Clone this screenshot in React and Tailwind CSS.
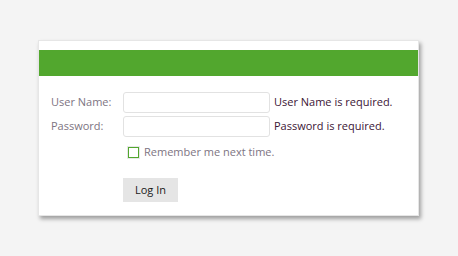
import React from 'react';

export default function App() {
  return (
    <div className="w-[458px] h-[256px] bg-[#f4f4f4] pt-[40px] pl-[38px] font-['Open_Sans','Noto_Sans',sans-serif]">
      <div className="w-[381px] h-[176px] bg-white border border-[#e6e6e6] shadow-[2px_3px_4px_rgba(0,0,0,0.35)] pt-[9px]">
        <div className="h-[26px] bg-[#52a72e]" />
        <form className="pl-[12px] pt-[16px]" onSubmit={(e) => e.preventDefault()}>
          <div className="flex items-center h-[21px]">
            <label className="w-[72px] text-[11px] text-[#7d7482]">User Name:</label>
            <input className="w-[147px] h-[21px] border border-[#e2e2e2] rounded-[3px] outline-none" />
            <span className="ml-[4px] text-[11px] text-[#3c1535]">User Name is required.</span>
          </div>
          <div className="flex items-center h-[21px] mt-[3px]">
            <label className="w-[72px] text-[11px] text-[#7d7482]">Password:</label>
            <input type="password" className="w-[147px] h-[21px] border border-[#e2e2e2] rounded-[3px] outline-none" />
            <span className="ml-[4px] text-[11px] text-[#3c1535]">Password is required.</span>
          </div>
          <div className="flex items-center mt-[8px] ml-[77px] h-[14px]">
            <span className="w-[11px] h-[11px] border border-[#52a72e] bg-white shadow-[0_0_0_1px_#e8e8e8]" />
            <span className="ml-[5px] text-[11px] text-[#7d7482]">Remember me next time.</span>
          </div>
          <button className="mt-[19px] ml-[72px] w-[55px] h-[24px] bg-[#e5e5e5] text-[11px] text-[#1a1a1a]">
            Log In
          </button>
        </form>
      </div>
    </div>
  );
}
